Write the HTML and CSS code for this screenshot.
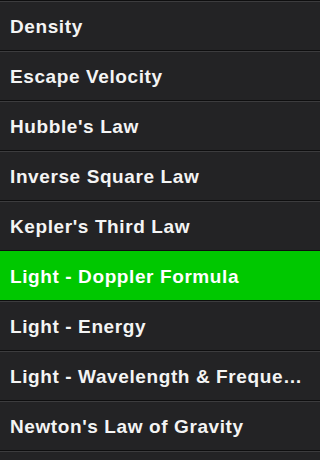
FILE: index.html
```html
<!DOCTYPE html>
<html lang="en">
<head>
    <meta charset="UTF-8">
    <meta name="viewport" content="width=device-width, initial-scale=1.0">
    <title>Formulas</title>
    <link rel="stylesheet" href="styles.css">
</head>
<body>
    <ul class="list">
        <li class="row">Density</li>
        <li class="row">Escape Velocity</li>
        <li class="row">Hubble's Law</li>
        <li class="row">Inverse Square Law</li>
        <li class="row">Kepler's Third Law</li>
        <li class="row selected">Light - Doppler Formula</li>
        <li class="row">Light - Energy</li>
        <li class="row">Light - Wavelength &amp; Frequency</li>
        <li class="row">Newton's Law of Gravity</li>
        <li class="row"></li>
    </ul>
</body>
</html>
```

FILE: styles.css
```css
*{
    padding: 0;
    margin: 0;
    box-sizing: border-box;
}
body{
    background-color: #232325;
    font-family: 'Liberation Sans', Arial, sans-serif;
    overflow: hidden;
}
.list{
    list-style: none;
    width: 320px;
}
.row{
    height: 50px;
    line-height: 46px;
    padding: 3px 12px 0 10px;
    border-top: 1px solid #0e0e0f;
    box-shadow: inset 0 1px 0 #3c3c3e;
    background: #232325;
    color: #f4f4f4;
    font-size: 19px;
    font-weight: bold;
    letter-spacing: 0.6px;
    white-space: nowrap;
    overflow: hidden;
    text-overflow: ellipsis;
}
.row.selected{
    background: #00c800;
    box-shadow: none;
    color: #fff;
}
```
